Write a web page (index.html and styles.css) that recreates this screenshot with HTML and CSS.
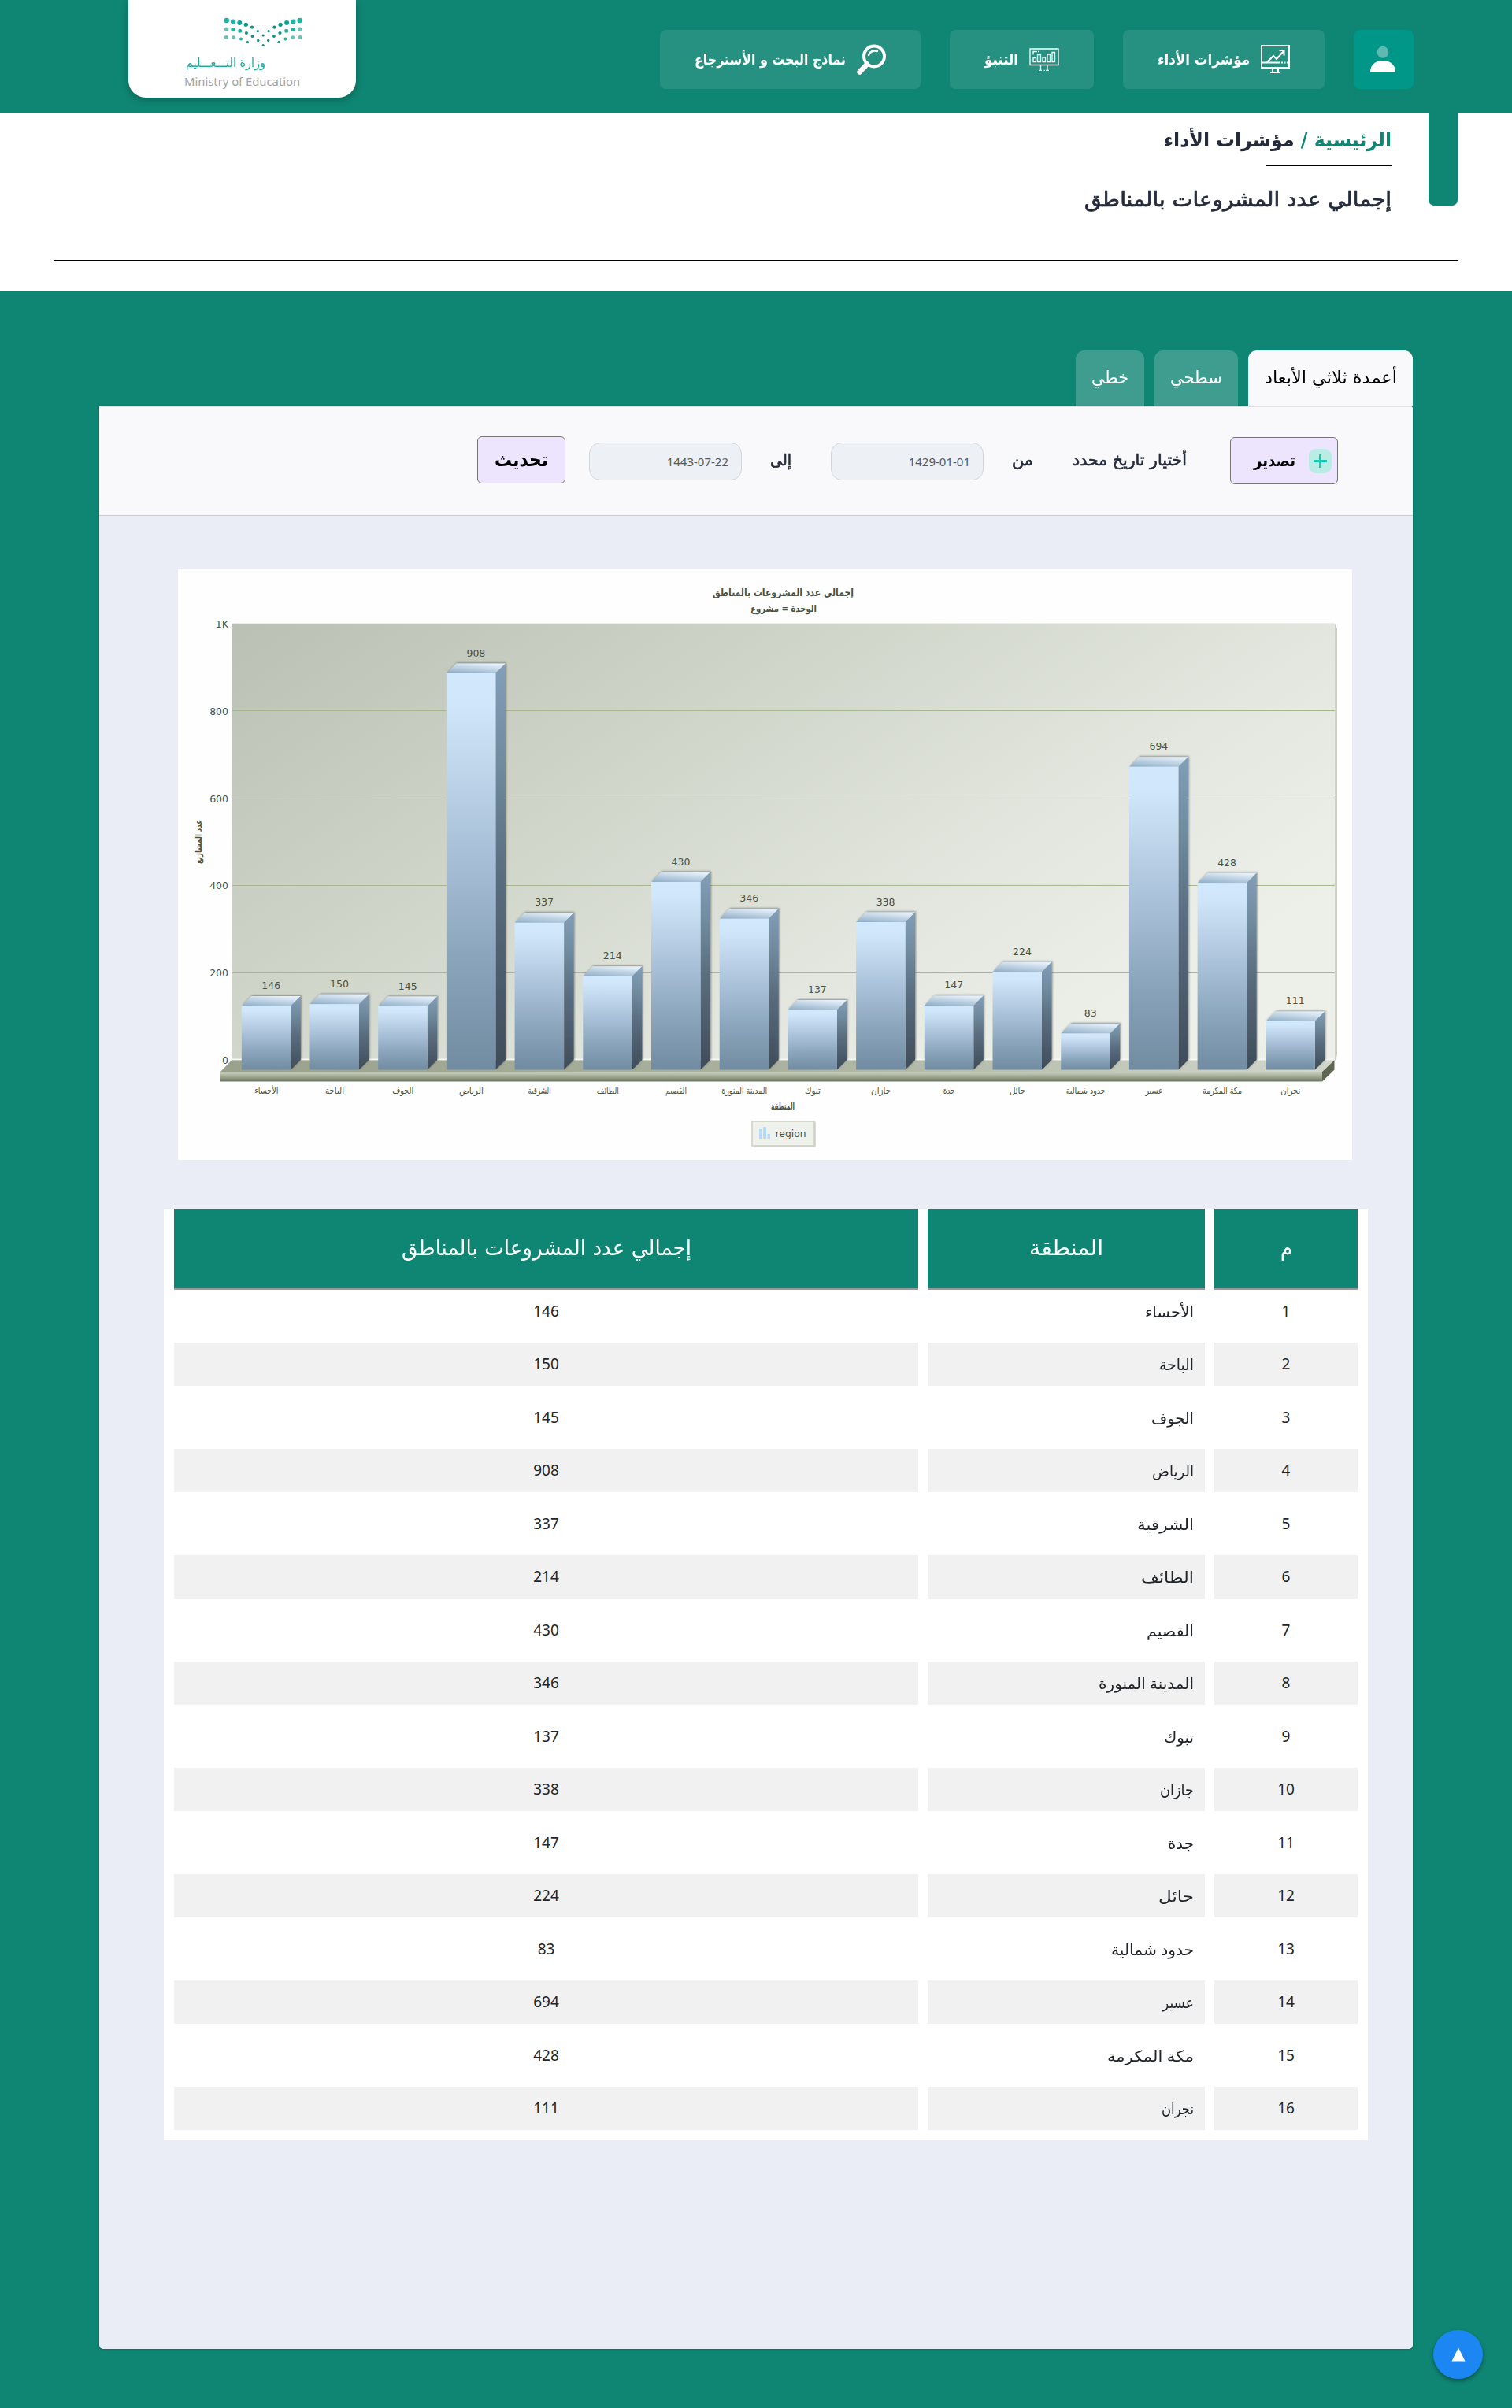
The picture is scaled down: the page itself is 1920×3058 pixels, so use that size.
FILE: index.html
```html
<!DOCTYPE html>
<html lang="ar" dir="rtl">
<head>
<meta charset="utf-8">
<title>إجمالي عدد المشروعات بالمناطق</title>
<link rel="stylesheet" href="styles.css">
</head>
<body>
<header class="topbar">
  <nav class="nav">
    <a class="user">
      <svg width="76" height="75" viewBox="0 0 76 75"><ellipse cx="37" cy="28.300" rx="7.300" ry="7.500" fill="#5fb9ae"/><path d="M21 53.500C21 44 28 39 37 39S53 44 53 53.500Z" fill="#fff"/></svg>
    </a>
    <a class="nav-item">
      <svg width="37" height="37" viewBox="0 0 37 37" fill="none" stroke="#fff"><path d="M1 1h35v28H1z" stroke-width="2"/><path d="M1 22.500h23M26 22.500h2M29.500 22.500h2M33 22.500h1" stroke-width="1.800"/><path d="M8 22l8-8 4 4 9-10M23.500 7h6v6.500" stroke-width="2"/><path d="M15 29v5M22 29v5M12 35h13" stroke-width="2"/></svg>
      <span data-w="117">مؤشرات الأداء</span>
    </a>
    <a class="nav-item">
      <svg width="38" height="30" viewBox="0 0 38 30" fill="none" stroke="#fff" stroke-width="1.300"><path d="M1 1h36v20.500H1zM5 8.500V4.500h5M11 4.500h1.500M5 12.500h3.500v5H5zM10.500 8.500h4v9h-4zM17 12h3.500v5.500H17zM23 8h3.500v9.500H23zM29 5.500h3.500v12H29zM14.500 22v6M23 22v6M12 28.400h4M18.500 28.400h1.500M21 28.400h4"/></svg>
      <span data-w="43">التنبؤ</span>
    </a>
    <a class="nav-item">
      <svg width="37" height="39" viewBox="0 0 37 39" fill="none" stroke="#fff" stroke-linecap="round"><circle cx="22" cy="15.500" r="13" stroke-width="4"/><path d="M13 25.500L3.500 35.500" stroke-width="6.500"/><path d="M15 14c1.500-4.500 6-6.500 11-5" stroke-width="2.500"/></svg>
      <span data-w="192">نماذج البحث و الأسترجاع</span>
    </a>
  </nav>
  <div class="logo">
    <svg class="dots" width="104" height="42" viewBox="284 20 104 42"></svg>
    <span class="logo-ar" data-w="101">وزارة التـــعـــليم</span>
    <span class="logo-en" dir="ltr">Ministry of Education</span>
  </div>
</header>

<section class="heading">
  <div class="heading-text">
    <p class="crumbs"><span data-w="289"><b>الرئيسية /</b> مؤشرات الأداء</span></p>
    <h1><span data-w="390">إجمالي عدد المشروعات بالمناطق</span></h1>
  </div>
  <div class="heading-end"><i class="ribbon"></i></div>
</section>

<main>
  <div class="tabs">
    <a class="tab active"><span data-w="168">أعمدة ثلاثي الأبعاد</span></a>
    <a class="tab"><span data-w="66">سطحي</span></a>
    <a class="tab"><span data-w="47">خطي</span></a>
  </div>
  <div class="panel">
    <div class="toolbar">
      <button class="export"><i class="plus"></i><span data-w="53">تصدير</span></button>
      <span class="lbl l1" data-w="145">أختيار تاريخ محدد</span>
      <span class="lbl l2" data-w="27">من</span>
      <div class="date d1">1429-01-01</div>
      <span class="lbl l3" data-w="27">إلى</span>
      <div class="date d2">1443-07-22</div>
      <button class="refresh"><span data-w="68">تحديث</span></button>
    </div>
    <div class="chart"></div>
    <div class="table-wrap">
      <table>
        <thead><tr><th class="c1"><span data-w="15">م</span></th><th class="c2"><span data-w="94">المنطقة</span></th><th class="c3"><span data-w="368">إجمالي عدد المشروعات بالمناطق</span></th></tr></thead>
        <tbody>
          <tr><td>1</td><td><span data-w="62">الأحساء</span></td><td>146</td></tr>
          <tr><td>2</td><td><span data-w="44">الباحة</span></td><td>150</td></tr>
          <tr><td>3</td><td><span data-w="54">الجوف</span></td><td>145</td></tr>
          <tr><td>4</td><td><span data-w="53">الرياض</span></td><td>908</td></tr>
          <tr><td>5</td><td><span data-w="72">الشرقية</span></td><td>337</td></tr>
          <tr><td>6</td><td><span data-w="67">الطائف</span></td><td>214</td></tr>
          <tr><td>7</td><td><span data-w="60">القصيم</span></td><td>430</td></tr>
          <tr><td>8</td><td><span data-w="121">المدينة المنورة</span></td><td>346</td></tr>
          <tr><td>9</td><td><span data-w="38">تبوك</span></td><td>137</td></tr>
          <tr><td>10</td><td><span data-w="43">جازان</span></td><td>338</td></tr>
          <tr><td>11</td><td><span data-w="33">جدة</span></td><td>147</td></tr>
          <tr><td>12</td><td><span data-w="45">حائل</span></td><td>224</td></tr>
          <tr><td>13</td><td><span data-w="105">حدود شمالية</span></td><td>83</td></tr>
          <tr><td>14</td><td><span data-w="40">عسير</span></td><td>694</td></tr>
          <tr><td>15</td><td><span data-w="110">مكة المكرمة</span></td><td>428</td></tr>
          <tr><td>16</td><td><span data-w="41">نجران</span></td><td>111</td></tr>
        </tbody>
      </table>
    </div>
  </div>
</main>
<a class="to-top"><svg width="18" height="18" viewBox="0 0 18 18"><path d="M9 .5L17.500 17.500H.5z" fill="#fff"/></svg></a>
<script src="page.js"></script>
</body>
</html>
```
FILE: styles.css
```css
* { box-sizing: border-box; }
body {
  margin: 0;
  position: relative;
  width: 1920px;
  height: 3058px;
  background: #0f8573;
  color: #252b3b;
  font-family: "DejaVu Sans", sans-serif;
}
[data-w] { display: inline-block; white-space: nowrap; text-align: right; transform-origin: right center; }

.topbar {
  height: 144px;
  padding: 0 125px 0 163px;
  display: flex;
  justify-content: space-between;
}
.nav { display: flex; gap: 37px; padding-top: 38px; height: 113px; }
.user { width: 76px; background: #009688; border-radius: 8px; }
.nav-item {
  display: flex;
  align-items: center;
  gap: 14px;
  padding: 0 44px;
  border-radius: 7px;
  background: rgba(255, 255, 255, .1);
  color: #fff;
  font-weight: bold;
  font-size: 18.500px;
}
.logo {
  width: 289px;
  height: 124px;
  padding: 20px 70px 0 71px;
  display: flex;
  flex-direction: column;
  background: #fff;
  border-radius: 0 0 22px 22px;
  box-shadow: 0 3px 10px rgba(0, 0, 0, .25);
}
.dots { margin-right: -5px; }
.logo-ar { margin: 7px 45px 0 0; height: 22px; line-height: 22px; color: #1aaa9a; font-size: 16px; }
.logo-en { margin-top: 1px; color: #a3a3a3; font: 14.800px/22px "Noto Sans", sans-serif; white-space: nowrap; }

.heading {
  height: 226px;
  display: flex;
  justify-content: flex-end;
  flex-direction: row-reverse;
  background: #fff;
  padding: 0 69px;
}
.heading-text { width: 1745px; height: 188px; border-bottom: 2px solid #000; padding-right: 47px; }
.heading-end { order: 2; width: 37px; height: 188px; border-bottom: 2px solid #000; }
.heading-text { order: 1; }
.ribbon { display: block; height: 117px; background: #0f8573; border-radius: 0 0 7px 7px; }
.crumbs { margin: 0; height: 67px; padding-top: 14px; font-size: 25px; line-height: 40px; font-weight: bold; background: linear-gradient(#000, #000) right bottom / 159px 1px no-repeat; }
.crumbs b { color: #0f8573; }
h1 { margin: 0; padding-top: 20px; font-size: 26px; line-height: 44px; font-weight: normal; -webkit-text-stroke: .7px; }

main { padding: 75px 126px 0; }
.tabs { display: flex; gap: 13px; height: 71px; }
.tab {
  width: 87px;
  text-align: center;
  line-height: 70px;
  font-size: 22px;
  color: #fff;
  background: rgba(255, 255, 255, .2);
  border-radius: 11px 11px 0 0;
}
.tab:nth-child(2) { width: 106px; }
.tab.active { width: 209px; color: #000; background: #f9f9fc; }
.panel {
  height: 2467px;
  background: #eaedf6;
  border-radius: 0 3px 5px 5px;
  box-shadow: 0 0 3px rgba(0, 0, 0, .35);
  overflow: hidden;
}
.toolbar {
  display: flex;
  height: 139px;
  padding: 37px 95px 0 0;
  background: #f9f9fc;
  border-top: 1px solid #dfe0e8;
  border-bottom: 1px solid #c9cad2;
}
button { font-family: inherit; border: 1px solid #767676; border-radius: 6px; background: #ede5fd; color: #000; padding: 0; font-weight: bold; }
.export { width: 137px; height: 60px; margin-top: 1px; display: flex; align-items: center; padding-right: 7px; gap: 17px; font-size: 20px; }
.plus {
  width: 29px; height: 31px; border-radius: 9px;
  background: linear-gradient(#1cc8b0, #1cc8b0) center / 17px 3px no-repeat, linear-gradient(#1cc8b0, #1cc8b0) center / 3px 17px no-repeat, #b8ece5;
}
.lbl { font-size: 20px; line-height: 60px; height: 60px; -webkit-text-stroke: .6px; }
.l1 { margin-right: 55px; }
.l2 { margin-right: 50px; }
.date {
  width: 194px; height: 48px; margin-top: 8px; padding-right: 16px;
  border: 1px solid #d2d5da; border-radius: 14px; background: #edf0f5;
  color: #555b60; font: 15px/46px "Noto Sans", sans-serif;
}
.d1 { margin-right: 36px; }
.l3 { margin-right: 50px; }
.d2 { margin-right: 36px; }
.refresh { width: 112px; height: 60px; margin-right: 30px; font-size: 24px; line-height: 56px; }

.chart { width: 1491px; height: 750px; margin: 68px 77px 0 0; background: #fefefe; }
.chart svg { display: block; direction: ltr; }

.table-wrap { width: 1529px; height: 1183px; margin: 62px 57px 0 0; background: #fff; padding-right: 13px; }
table { display: block; width: 1504px; }
thead, tbody { display: block; }
tr { display: flex; gap: 12px; margin-bottom: 12.500px; }
thead tr { margin-bottom: 0; }
th { height: 102.500px; background: linear-gradient(#0f8573 101px, #fff 101px, #fff 101.500px, #999 101.500px); color: #fff; font-weight: normal; font-size: 28px; line-height: 100px; padding: 0; }
td { height: 55px; padding: 0 14px; font: 19px/55px "Noto Sans", "DejaVu Sans", sans-serif; color: #212529; text-align: center; }
tr > :nth-child(1) { width: 182px; }
tr > :nth-child(2) { width: 352px; }
tr > :nth-child(3) { width: 945px; }
td:nth-child(2) { text-align: right; font-size: 19.500px; }
tbody tr:nth-child(even) td { background: #f1f1f1; }

.to-top {
  position: absolute; left: 1820px; top: 2959px; width: 63px; height: 62px;
  display: flex; align-items: center; justify-content: center;
  background: #1c87f3; border-radius: 50%; box-shadow: 0 3px 5px rgba(0, 0, 0, .35);
}
```
FILE: page.js
```js
document.querySelectorAll('[data-w]').forEach(el => {
  const w = +el.dataset.w;
  el.style.width = 'max-content';
  const n = el.getBoundingClientRect().width;
  el.style.width = w + 'px';
  el.style.transform = `scaleX(${w / n})`;
});

// Logo dot pattern: [x, y, radius]; the right half mirrors the left
const rows = [
  [[288.7,26,3.3],[297,27.5,3.1],[305.3,29,3],[313.3,31.3,2.6],[321,34.7,2.1],[328.3,39.6,1.7],[335.2,45,1.6]],
  [[288.7,37.3,2.7],[297,37.6,2.7],[305.7,39.2,2.5],[313.9,42,2.1],[321.5,46,1.9],[328.7,51.4,1.7],[335.2,57.5,1.5]],
  [[288.3,47.5,2.5],[297.6,47.6,2.3],[307,49.6,2],[315.4,53.3,1.5]]
];
const cols = [['#1fb3a3','#1fb3a3','#0da294','#0a9a8b','#0d9384','#0c8c7c','#0f8573'],['#66c3b8','#22b0a1','#22b0a1','#12998b','#0d9384','#0c8c7c','#0f8573'],['#66c3b8','#66c3b8','#27ae9f','#0fa091']];
let dots = '';
rows.forEach((r, i) => r.forEach(([x, y, q], j) => {
  dots += `<circle cx="${x}" cy="${y}" r="${q}" fill="${cols[i][j]}"/>`;
  if (x < 335) dots += `<circle cx="${670.4 - x}" cy="${y}" r="${q}" fill="${cols[i][j]}"/>`;
}));
document.querySelector('.dots').innerHTML = dots;

// 3D column chart: [label, value, label width]
const data = [['الأحساء',146,30],['الباحة',150,24],['الجوف',145,27],['الرياض',908,31],['الشرقية',337,29],['الطائف',214,28],['القصيم',430,27],['المدينة المنورة',346,58],['تبوك',137,20],['جازان',338,25],['جدة',147,15],['حائل',224,20],['حدود شمالية',83,50],['عسير',694,22],['مكة المكرمة',428,50],['نجران',111,25]];
const text = (x, y, s, o = '') => `<text x="${x}" y="${y}" text-anchor="middle" ${o}>${s}</text>`;
const fit = w => `textLength="${w}" lengthAdjust="spacingAndGlyphs" direction="rtl"`;
const grad = (id, v, stops) => `<linearGradient id="${id}" ${v}>${stops.map(([o, c]) => `<stop offset="${o}" stop-color="${c}"/>`).join('')}</linearGradient>`;
let s = `<svg width="1491" height="750" viewBox="226 723 1491 750" font-family="DejaVu Sans, sans-serif" font-size="12.5" fill="#4b5242"><defs>
${grad('wall', 'x1="0" y1="0" x2="1" y2="0.6"', [[0,'#bac0b3'],[.44,'#d2d7cc'],[.735,'#e2e6de'],[1,'#edf0e9']])}
${grad('front', 'x1="0" y1="0" x2="0" y2="1"', [[0,'#d2e8fd'],[.08,'#d0e6fa'],[.5,'#a3bbd3'],[.7,'#8ca7bd'],[1,'#718ba1']])}
${grad('side', 'x1="0" y1="0" x2="0" y2="1"', [[0,'#829fb9'],[.25,'#708a9e'],[.5,'#5b6f82'],[1,'#3f4c59']])}
${grad('top', 'x1="0.1" y1="1" x2="0.6" y2="0"', [[0,'#91afc8'],[1,'#e3eff9']])}
${grad('floor', 'x1="0" y1="0" x2="1" y2="0"', [[0,'#9aa18d'],[.5,'#aab19e'],[1,'#d2d7cc']])}
${grad('edge', 'x1="0" y1="0" x2="0" y2="1"', [[0,'#ccd3c0'],[.5,'#a1a992'],[1,'#6d7560']])}
<filter id="sh" x="-20%" y="-20%" width="140%" height="140%"><feDropShadow dx="1" dy="-1" stdDeviation="1.2" flood-color="#333" flood-opacity=".5"/></filter></defs>
<path d="M1695 792l3 6v542l-3 8z" fill="#cdd2c8"/><path d="M295 792h1400v556H295z" fill="url(#wall)"/><path d="M295 791.5h1400M294.5 792v554" stroke="#edf0ea" fill="none"/><path d="M295 1345.5h1400" stroke="#f5f7f3" stroke-width="2"/>`;
for (let i = 0; i < 6; i++) {
  const y = 1345.5 - i * 110.8;
  if (i && i < 5) s += `<path d="M295 ${Math.round(y) + .5}h1400" stroke="#a7b890"/>`;
  s += `<text x="290" y="${y + 5.5}" text-anchor="end">${i === 5 ? '1K' : i * 200}</text>`;
}
s += `<path d="M280 1361l14-14.5h1401l-16 14.5z" fill="url(#floor)"/><path d="M280 1361h1399v12.5H280z" fill="url(#edge)"/><path d="M1679 1361l15.5-14.5v12l-15.5 15z" fill="#5f6752"/><path d="M280 1373.5h1399" stroke="#b9bfb0"/>`;
data.forEach(([name, v, w], i) => {
  const x = 306.8 + i * 86.7, b = x + 62.5, e = x + 75, y = 1358.5 - v * .5545, t = y - 12.5;
  s += `<g filter="url(#sh)"><path d="M${x} ${y}l12.5-12.5H${e}L${b} ${y}z" fill="url(#top)"/><path d="M${b} ${y}L${e} ${t}V1346L${b} 1358.5z" fill="url(#side)"/></g>
  <path d="M${x} ${y}H${b}V1358.5H${x}z" fill="url(#front)"/>`;
  s += text(x + 37.5, t - 9, v) + text(x + 31.5, 1389, name, fit(w) + ' font-size="11.5"');
});
s += text(994.5, 757, 'إجمالي عدد المشروعات بالمناطق', fit(179) + ' font-weight="bold" font-size="13.5"')
  + text(995, 777, 'الوحدة = مشروع', fit(84) + ' font-weight="bold" font-size="12"')
  + text(994, 1409, 'المنطقة', fit(30) + ' font-weight="bold" font-size="11.5"')
  + text(0, 0, 'عدد المشاريع', fit(56) + ' transform="translate(256 1069) rotate(-90)" font-weight="bold" font-size="11.5"')
  + `<g><path d="M957 1425h79v32h-79z" fill="#999" opacity=".35"/><path d="M955 1424h79v31h-79z" fill="#eff2ec" stroke="#cbd0bf" stroke-width="1.5"/><path d="M964 1434h4v12h-4zM969 1431h4v15h-4zM974.5 1440h3.5v6h-3.5z" fill="#b5dafa"/>${text(1004, 1443.5, 'region', 'font-size="12.5" textLength="39" lengthAdjust="spacingAndGlyphs"')}</g></svg>`;
document.querySelector('.chart').innerHTML = s;
```
